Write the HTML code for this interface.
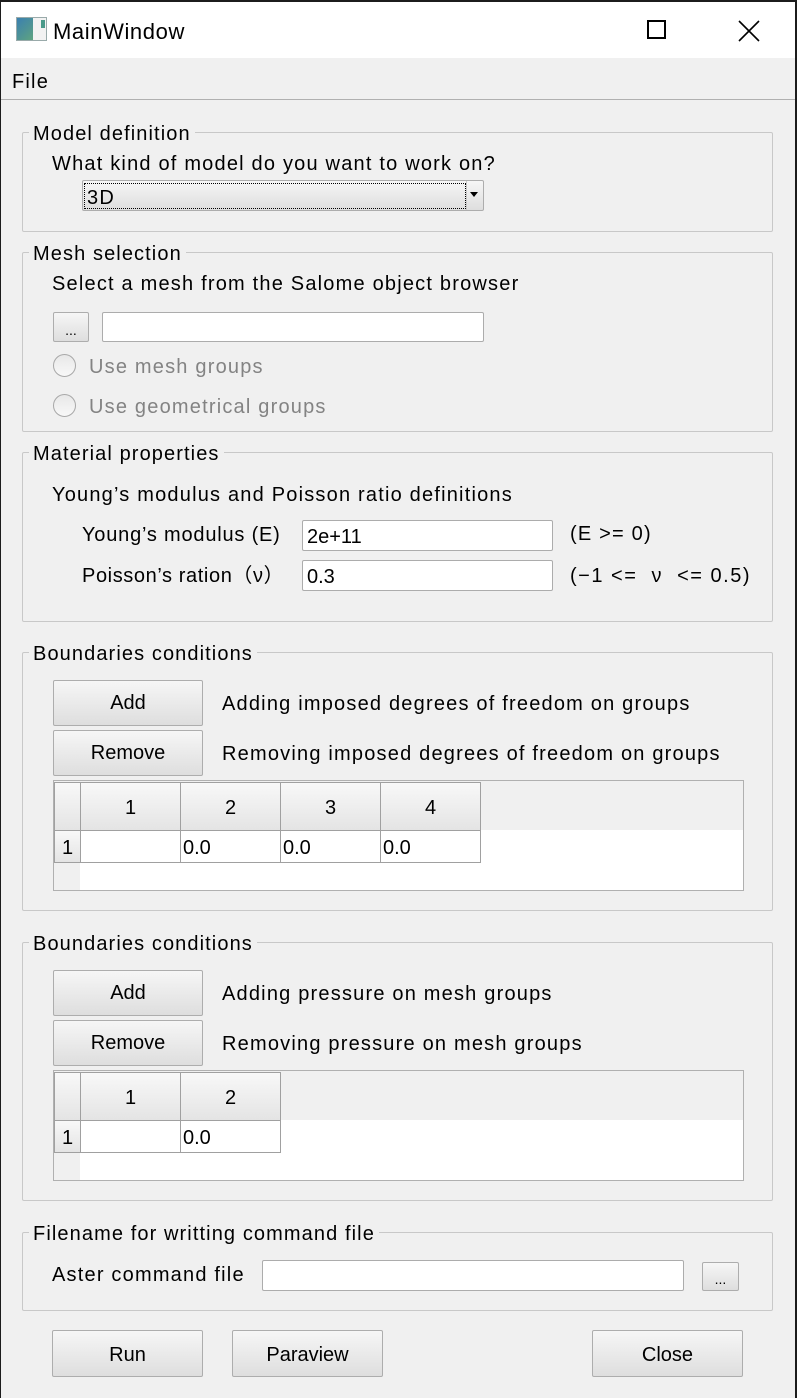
<!DOCTYPE html>
<html><head><meta charset="utf-8"><style>
*{margin:0;padding:0;box-sizing:border-box}
html,body{width:797px;height:1398px;overflow:hidden;background:#1c1c1c}
body{font-family:"Liberation Sans","Noto Sans CJK JP",sans-serif;font-size:20px;color:#000;position:relative}
#win{position:absolute;left:1px;top:2px;width:794px;height:1396px;background:#f0f0f0}
.a{position:absolute;white-space:nowrap}
.t{position:absolute;white-space:nowrap;line-height:24px;letter-spacing:1.2px;margin-top:1px}
.grp{position:absolute;border:1px solid #c8c8c8;border-radius:2px}
.gt{position:absolute;background:#f0f0f0;padding:0 4px;line-height:24px;white-space:nowrap;letter-spacing:1.1px;margin-top:1px}
.btn{position:absolute;border:1px solid #adadad;border-radius:2px;background:linear-gradient(#f6f6f6,#dedede);text-align:center}
.inp{position:absolute;background:#fff;border:1px solid #acacac;border-radius:2px;padding-left:4px}
.rad{position:absolute;width:23px;height:23px;border-radius:50%;border:1px solid #a8a8a8;background:linear-gradient(#e8e8e8,#f8f8f8)}
.hd{position:absolute;background:linear-gradient(#f8f8f8,#e4e4e4);border:1px solid #a0a0a0;text-align:center}
.cell{position:absolute;background:#fff;border:1px solid #a0a0a0;padding-left:2px;line-height:30px}
.gray{color:#838383}
</style></head><body>
<div id="win">
<div class="a" style="left:0;top:0;width:794px;height:56px;background:#fff"></div>
<div class="a" style="left:15px;top:15px;width:31px;height:24px;border:1px solid #9aa;background:linear-gradient(135deg,#3a7fb0,#6bb06f);"></div>
<div class="a" style="left:32px;top:16px;width:13px;height:22px;background:#f2f2f2"></div>
<div class="a" style="left:40px;top:18px;width:4px;height:8px;background:#4a9a8a"></div>
<div class="t" style="left:52px;top:17px;font-size:22px;letter-spacing:0.6px">MainWindow</div>
<div class="a" style="left:646px;top:18px;width:19px;height:19px;border:2px solid #000"></div>
<svg class="a" style="left:737px;top:18px" width="22" height="22"><path d="M1 1L21 21M21 1L1 21" stroke="#000" stroke-width="1.6"/></svg>
<div class="t" style="left:11px;top:67px">File</div>
<div class="a" style="left:0;top:97px;width:794px;height:1px;background:#b0b0b0"></div>

<div class="grp" style="left:21px;top:130px;width:751px;height:100px"></div>
<div class="gt" style="left:28px;top:119px">Model definition</div>
<div class="t" style="left:51px;top:149px">What kind of model do you want to work on?</div>
<div class="btn" style="left:81px;top:178px;width:402px;height:31px;text-align:left"></div>
<div class="a" style="left:83px;top:181px;width:382px;height:26px;border:1px dotted #000"></div>
<div class="a" style="left:465px;top:179px;width:1px;height:29px;background:#c8c8c8"></div>
<div class="t" style="left:86px;top:183px">3D</div>
<svg class="a" style="left:469px;top:190px" width="10" height="6"><path d="M0 0H8L4 5Z" fill="#000"/></svg>

<div class="grp" style="left:21px;top:250px;width:751px;height:180px"></div>
<div class="gt" style="left:28px;top:239px">Mesh selection</div>
<div class="t" style="left:51px;top:269px">Select a mesh from the Salome object browser</div>
<div class="btn" style="left:52px;top:310px;width:36px;height:30px;font-size:14px;line-height:34px">...</div>
<div class="inp" style="left:101px;top:310px;width:382px;height:30px"></div>
<div class="rad" style="left:52px;top:352px"></div>
<div class="t gray" style="left:88px;top:352px">Use mesh groups</div>
<div class="rad" style="left:52px;top:392px"></div>
<div class="t gray" style="left:88px;top:392px">Use geometrical groups</div>

<div class="grp" style="left:21px;top:450px;width:751px;height:170px"></div>
<div class="gt" style="left:28px;top:439px">Material properties</div>
<div class="t" style="left:51px;top:480px">Young’s modulus and Poisson ratio definitions</div>
<div class="t" style="left:81px;top:520px;letter-spacing:0.8px">Young’s modulus (E)</div>
<div class="inp" style="left:301px;top:518px;width:251px;height:31px;line-height:32px">2e+11</div>
<div class="t" style="left:569px;top:519px">(E &gt;= 0)</div>
<div class="t" style="left:81px;top:561px;letter-spacing:0.6px">Poisson’s ration（ν）</div>
<div class="inp" style="left:301px;top:558px;width:251px;height:31px;line-height:32px">0.3</div>
<div class="t" style="left:569px;top:561px;letter-spacing:1.5px">(−1 &lt;=&nbsp; ν &nbsp;&lt;= 0.5)</div>

<div class="grp" style="left:21px;top:650px;width:751px;height:259px"></div>
<div class="gt" style="left:28px;top:639px">Boundaries conditions</div>
<div class="btn" style="left:52px;top:678px;width:150px;height:46px;line-height:44px">Add</div>
<div class="t" style="left:221px;top:689px">Adding imposed degrees of freedom on groups</div>
<div class="btn" style="left:52px;top:728px;width:150px;height:46px;line-height:44px">Remove</div>
<div class="t" style="left:221px;top:739px">Removing imposed degrees of freedom on groups</div>
<div class="a" style="left:52px;top:778px;width:691px;height:111px;border:1px solid #b0b0b0;background:#fff"></div>
<div class="a" style="left:53px;top:779px;width:689px;height:49px;background:#f0f0f0"></div>
<div class="a" style="left:53px;top:828px;width:26px;height:60px;background:#f0f0f0"></div>
<div class="hd" style="left:53px;top:780px;width:27px;height:49px"></div>
<div class="hd" style="left:79px;top:780px;width:101px;height:49px;line-height:50px">1</div>
<div class="hd" style="left:179px;top:780px;width:101px;height:49px;line-height:50px">2</div>
<div class="hd" style="left:279px;top:780px;width:101px;height:49px;line-height:50px">3</div>
<div class="hd" style="left:379px;top:780px;width:101px;height:49px;line-height:50px">4</div>
<div class="hd" style="left:53px;top:828px;width:27px;height:33px;line-height:34px">1</div>
<div class="cell" style="left:79px;top:828px;width:101px;height:33px"></div>
<div class="cell" style="left:179px;top:828px;width:101px;height:33px;line-height:34px">0.0</div>
<div class="cell" style="left:279px;top:828px;width:101px;height:33px;line-height:34px">0.0</div>
<div class="cell" style="left:379px;top:828px;width:101px;height:33px;line-height:34px">0.0</div>

<div class="grp" style="left:21px;top:940px;width:751px;height:259px"></div>
<div class="gt" style="left:28px;top:929px">Boundaries conditions</div>
<div class="btn" style="left:52px;top:968px;width:150px;height:46px;line-height:44px">Add</div>
<div class="t" style="left:221px;top:979px">Adding pressure on mesh groups</div>
<div class="btn" style="left:52px;top:1018px;width:150px;height:46px;line-height:44px">Remove</div>
<div class="t" style="left:221px;top:1029px">Removing pressure on mesh groups</div>
<div class="a" style="left:52px;top:1068px;width:691px;height:111px;border:1px solid #b0b0b0;background:#fff"></div>
<div class="a" style="left:53px;top:1069px;width:689px;height:49px;background:#f0f0f0"></div>
<div class="a" style="left:53px;top:1118px;width:26px;height:60px;background:#f0f0f0"></div>
<div class="hd" style="left:53px;top:1070px;width:27px;height:49px"></div>
<div class="hd" style="left:79px;top:1070px;width:101px;height:49px;line-height:50px">1</div>
<div class="hd" style="left:179px;top:1070px;width:101px;height:49px;line-height:50px">2</div>
<div class="hd" style="left:53px;top:1118px;width:27px;height:33px;line-height:34px">1</div>
<div class="cell" style="left:79px;top:1118px;width:101px;height:33px"></div>
<div class="cell" style="left:179px;top:1118px;width:101px;height:33px;line-height:34px">0.0</div>

<div class="grp" style="left:21px;top:1230px;width:751px;height:79px"></div>
<div class="gt" style="left:28px;top:1219px">Filename for writting command file</div>
<div class="t" style="left:51px;top:1260px">Aster command file</div>
<div class="inp" style="left:261px;top:1258px;width:422px;height:31px"></div>
<div class="btn" style="left:701px;top:1260px;width:37px;height:29px;font-size:14px;line-height:32px">...</div>

<div class="btn" style="left:51px;top:1328px;width:151px;height:47px;line-height:48px">Run</div>
<div class="btn" style="left:231px;top:1328px;width:151px;height:47px;line-height:48px">Paraview</div>
<div class="btn" style="left:591px;top:1328px;width:151px;height:47px;line-height:48px">Close</div>
</div>
</body></html>
